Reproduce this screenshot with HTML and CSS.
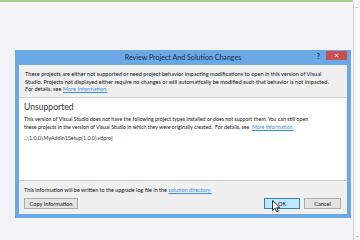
FILE: index.html
```html
<!DOCTYPE html>
<html>
<head>
<meta charset="utf-8">
<link rel="stylesheet" href="styles.css">
</head>
<body>
<div class="screen">
  <div class="main">
    <div class="topbar"></div>
    <div class="dialog">
      <div class="titlebar">
        <span class="title">Review Project And Solution Changes</span>
        <span class="help">?</span>
        <span class="close">×</span>
      </div>
      <div class="inner">
        <div class="info">These projects are either not supported or need project behavior impacting modifications to open in this version of Visual<br>Studio. Projects not displayed either require no changes or will automatically be modified such that behavior is not impacted.<br>For details, see <a class="link">More information.</a></div>
        <div class="panel">
          <div class="heading">Unsupported</div>
          <div class="para">This version of Visual Studio does not have the following project types installed or does not support them. You can still open<br>these projects in the version of Visual Studio in which they were originally created.&nbsp; For details, see&nbsp; <a class="link">More information.</a></div>
          <div class="path">..\1.0.0\MyAddin1Setup(1.0.0).vdproj</div>
        </div>
        <div class="footer">
          <div class="note">This information will be written to the upgrade log file in the <a class="link">solution directory.</a></div>
          <div class="buttons">
            <button class="btn">Copy Information</button>
            <span class="spacer"></span>
            <button class="btn ok">OK</button>
            <button class="btn cancel">Cancel</button>
          </div>
        </div>
      </div>
      <svg class="cursor" width="9" height="13" viewBox="0 0 9 13"><path d="M0.5 0.5 L0.5 10.5 L3 8.2 L4.8 12 L6.3 11.3 L4.6 7.7 L7.8 7.7 Z" fill="#fff" stroke="#222" stroke-width="0.9" stroke-linejoin="round"/></svg>
    </div>
  </div>
  <div class="edge"><span class="dash top">-</span><span class="dash bottom">-</span></div>
</div>
</body>
</html>
```
FILE: styles.css
```css
html, body {
  margin: 0;
  padding: 0;
}
body {
  width: 360px;
  height: 240px;
  overflow: hidden;
  background: #f3f3f5;
  font-family: "Lato", "Noto Sans", sans-serif;
  color: #111;
}
.screen {
  display: flex;
  height: 240px;
}
.main {
  width: 353px;
}
.topbar {
  height: 2px;
  background: #a6d08c;
  border-bottom: 2px solid #fafafa;
}
.edge {
  position: relative;
  width: 6px;
  border-left: 1px solid #cfcfd3;
  background: #f7f7f8;
  margin-top: 4px;
}
.dash {
  position: absolute;
  left: 2px;
  font-size: 6px;
  line-height: 6px;
  color: #555;
}
.dash.top { top: 0; }
.dash.bottom { bottom: 1px; }
.dialog {
  position: relative;
  margin: 46px 0 0 15px;
  width: 336px;
  height: 168px;
  box-sizing: border-box;
  background: #6ba8e6;
  padding: 0 4px 4px 4px;
  display: flex;
  flex-direction: column;
}
.titlebar {
  height: 15px;
  display: flex;
  align-items: center;
  justify-content: center;
  position: relative;
}
.title {
  font-size: 7.1px;
  color: #1b2c44;
}
.help {
  position: absolute;
  right: 27px;
  top: 2px;
  font-size: 7px;
  font-weight: bold;
  color: #2a2a2a;
}
.close {
  position: absolute;
  right: 0;
  top: 1px;
  width: 21px;
  height: 9px;
  background: #c9504f;
  color: #fff;
  font-size: 8px;
  line-height: 9px;
  text-align: center;
}
.inner {
  flex: 1;
  background: #f0f0f0;
  display: flex;
  flex-direction: column;
}
.info {
  height: 32px;
  box-sizing: border-box;
  padding: 5px 0 0 6px;
  font-size: 5.6px;
  line-height: 7.7px;
  white-space: nowrap;
}
.link {
  color: #3a8ee0;
  text-decoration: underline;
}
.panel {
  height: 84px;
  box-sizing: border-box;
  background: #fff;
  border-top: 1px solid #d4d4d4;
  border-bottom: 1px solid #c8c8c8;
  margin-right: 1px;
  padding: 3px 0 0 5px;
}
.heading {
  font-size: 8.6px;
  line-height: 13px;
  color: #333;
}
.para {
  margin-top: 2px;
  font-size: 5.25px;
  line-height: 7.5px;
  white-space: nowrap;
}
.path {
  margin-top: 4px;
  font-size: 5.4px;
  line-height: 7.5px;
  color: #333;
}
.footer {
  flex: 1;
  padding: 5px 6px 0 5px;
}
.note {
  font-size: 5.45px;
  line-height: 8px;
  white-space: nowrap;
}
.buttons {
  display: flex;
  gap: 4px;
  margin-top: 4px;
}
.spacer {
  flex: 1;
}
.btn {
  height: 11px;
  box-sizing: border-box;
  padding: 0;
  border: 1px solid #acacac;
  background: #e3e3e3;
  font-family: "Lato", "Noto Sans", sans-serif;
  font-size: 5.6px;
  line-height: 9px;
  color: #111;
  width: 54px;
}
.btn.ok {
  width: 36px;
  background: #bee6fd;
  border-color: #3c7fb1;
}
.btn.cancel {
  width: 37px;
}
.cursor {
  position: absolute;
  left: 257px;
  top: 150px;
}
```
